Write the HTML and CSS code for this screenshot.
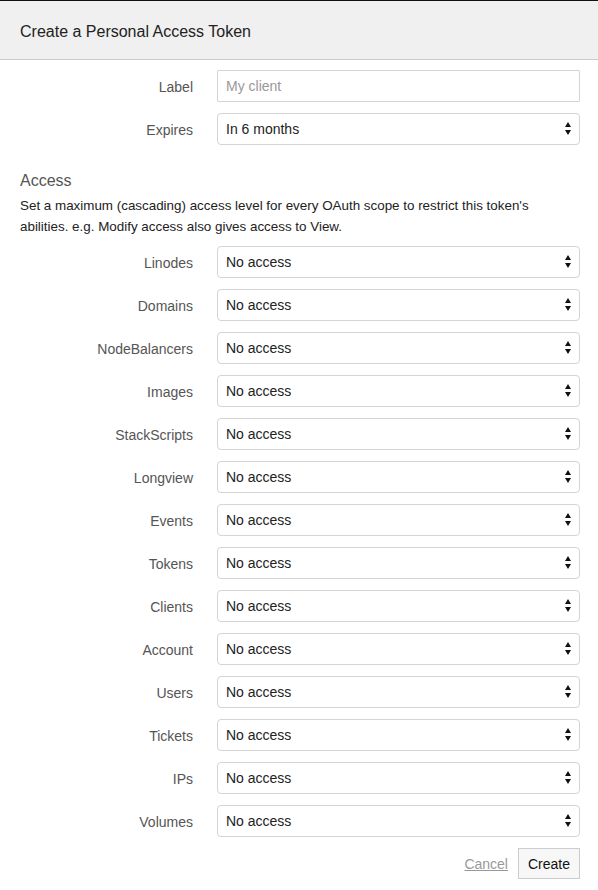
FILE: index.html
```html
<!DOCTYPE html>
<html lang="en">
<head>
<meta charset="utf-8">
<title>Create a Personal Access Token</title>
<link rel="stylesheet" href="styles.css">
</head>
<body>
<div class="modal">
  <div class="header"><h1 class="title">Create a Personal Access Token</h1></div>
  <div class="body">
    <div class="grid">
      <label class="lbl" for="label">Label</label>
      <input class="text" id="label" type="text" placeholder="My client">
      <label class="lbl" for="expires">Expires</label>
      <div class="sel"><select id="expires"><option>In 6 months</option></select><svg class="arrow" width="6" height="13" viewBox="0 0 6 13"><path d="M3 0 L6 5 L0 5 Z M0 8 L6 8 L3 13 Z" fill="#111"/></svg></div>
    </div>
    <h2 class="section">Access</h2>
    <p class="desc">Set a maximum (cascading) access level for every OAuth scope to restrict this token's abilities. e.g. Modify access also gives access to View.</p>
    <div class="grid scopes">
      <span class="lbl">Linodes</span><div class="sel"><select><option>No access</option></select><svg class="arrow" width="6" height="13" viewBox="0 0 6 13"><path d="M3 0 L6 5 L0 5 Z M0 8 L6 8 L3 13 Z" fill="#111"/></svg></div>
      <span class="lbl">Domains</span><div class="sel"><select><option>No access</option></select><svg class="arrow" width="6" height="13" viewBox="0 0 6 13"><path d="M3 0 L6 5 L0 5 Z M0 8 L6 8 L3 13 Z" fill="#111"/></svg></div>
      <span class="lbl">NodeBalancers</span><div class="sel"><select><option>No access</option></select><svg class="arrow" width="6" height="13" viewBox="0 0 6 13"><path d="M3 0 L6 5 L0 5 Z M0 8 L6 8 L3 13 Z" fill="#111"/></svg></div>
      <span class="lbl">Images</span><div class="sel"><select><option>No access</option></select><svg class="arrow" width="6" height="13" viewBox="0 0 6 13"><path d="M3 0 L6 5 L0 5 Z M0 8 L6 8 L3 13 Z" fill="#111"/></svg></div>
      <span class="lbl">StackScripts</span><div class="sel"><select><option>No access</option></select><svg class="arrow" width="6" height="13" viewBox="0 0 6 13"><path d="M3 0 L6 5 L0 5 Z M0 8 L6 8 L3 13 Z" fill="#111"/></svg></div>
      <span class="lbl">Longview</span><div class="sel"><select><option>No access</option></select><svg class="arrow" width="6" height="13" viewBox="0 0 6 13"><path d="M3 0 L6 5 L0 5 Z M0 8 L6 8 L3 13 Z" fill="#111"/></svg></div>
      <span class="lbl">Events</span><div class="sel"><select><option>No access</option></select><svg class="arrow" width="6" height="13" viewBox="0 0 6 13"><path d="M3 0 L6 5 L0 5 Z M0 8 L6 8 L3 13 Z" fill="#111"/></svg></div>
      <span class="lbl">Tokens</span><div class="sel"><select><option>No access</option></select><svg class="arrow" width="6" height="13" viewBox="0 0 6 13"><path d="M3 0 L6 5 L0 5 Z M0 8 L6 8 L3 13 Z" fill="#111"/></svg></div>
      <span class="lbl">Clients</span><div class="sel"><select><option>No access</option></select><svg class="arrow" width="6" height="13" viewBox="0 0 6 13"><path d="M3 0 L6 5 L0 5 Z M0 8 L6 8 L3 13 Z" fill="#111"/></svg></div>
      <span class="lbl">Account</span><div class="sel"><select><option>No access</option></select><svg class="arrow" width="6" height="13" viewBox="0 0 6 13"><path d="M3 0 L6 5 L0 5 Z M0 8 L6 8 L3 13 Z" fill="#111"/></svg></div>
      <span class="lbl">Users</span><div class="sel"><select><option>No access</option></select><svg class="arrow" width="6" height="13" viewBox="0 0 6 13"><path d="M3 0 L6 5 L0 5 Z M0 8 L6 8 L3 13 Z" fill="#111"/></svg></div>
      <span class="lbl">Tickets</span><div class="sel"><select><option>No access</option></select><svg class="arrow" width="6" height="13" viewBox="0 0 6 13"><path d="M3 0 L6 5 L0 5 Z M0 8 L6 8 L3 13 Z" fill="#111"/></svg></div>
      <span class="lbl">IPs</span><div class="sel"><select><option>No access</option></select><svg class="arrow" width="6" height="13" viewBox="0 0 6 13"><path d="M3 0 L6 5 L0 5 Z M0 8 L6 8 L3 13 Z" fill="#111"/></svg></div>
      <span class="lbl">Volumes</span><div class="sel"><select><option>No access</option></select><svg class="arrow" width="6" height="13" viewBox="0 0 6 13"><path d="M3 0 L6 5 L0 5 Z M0 8 L6 8 L3 13 Z" fill="#111"/></svg></div>
    </div>
    <div class="footer">
      <a class="cancel" href="#">Cancel</a>
      <button class="create" type="button">Create</button>
    </div>
  </div>
</div>
</body>
</html>
```

FILE: styles.css
```css
html, body {
  margin: 0;
  padding: 0;
  background: #fff;
}
body {
  font-family: "Liberation Sans", Arial, sans-serif;
  color: #222;
}
.modal {
  border-top: 1px solid #111;
}
.header {
  height: 58px;
  background: #f0f0f0;
  border-bottom: 1px solid #ccc;
  display: flex;
  align-items: center;
  padding: 0 20px;
}
.title {
  margin: 4px 0 0;
  font-size: 16px;
  font-weight: normal;
  color: #222;
}
.body {
  padding: 10px 18px 10px 20px;
}
.grid {
  display: grid;
  grid-template-columns: 173px 1fr;
  column-gap: 24px;
  row-gap: 11px;
  align-items: center;
}
.lbl {
  text-align: right;
  font-size: 14px;
  color: #555;
  padding-top: 1px;
}
.text {
  box-sizing: border-box;
  height: 32px;
  border: 1px solid #d4d4d4;
  border-radius: 1px;
  padding: 0 8px;
  font: 14px "Liberation Sans", Arial, sans-serif;
  color: #222;
  outline: none;
}
.text::placeholder {
  color: #999;
}
.sel {
  position: relative;
  height: 32px;
}
.sel select {
  -webkit-appearance: none;
  appearance: none;
  box-sizing: border-box;
  width: 100%;
  height: 32px;
  border: 1px solid #d4d4d4;
  border-radius: 4px;
  background: #fff;
  padding: 0 24px 0 8px;
  font: 14px "Liberation Sans", Arial, sans-serif;
  color: #222;
  outline: none;
}
.arrow {
  position: absolute;
  right: 9px;
  top: 9px;
  pointer-events: none;
}
.section {
  margin: 25px 0 0;
  font-size: 16px;
  font-weight: normal;
  line-height: 22px;
  color: #555;
}
.desc {
  margin: 3px 0 0;
  font-size: 13.4px;
  line-height: 21px;
  color: #222;
}
.scopes {
  margin-top: 9px;
}
.footer {
  margin-top: 11px;
  display: flex;
  justify-content: flex-end;
  align-items: center;
  gap: 10px;
}
.cancel {
  font-size: 14px;
  color: #999;
  text-decoration: underline;
}
.create {
  box-sizing: border-box;
  height: 31px;
  padding: 0 9px;
  background: #f7f7f7;
  border: 1px solid #ccc;
  border-radius: 0;
  font: 14px "Liberation Sans", Arial, sans-serif;
  color: #111;
}
```
